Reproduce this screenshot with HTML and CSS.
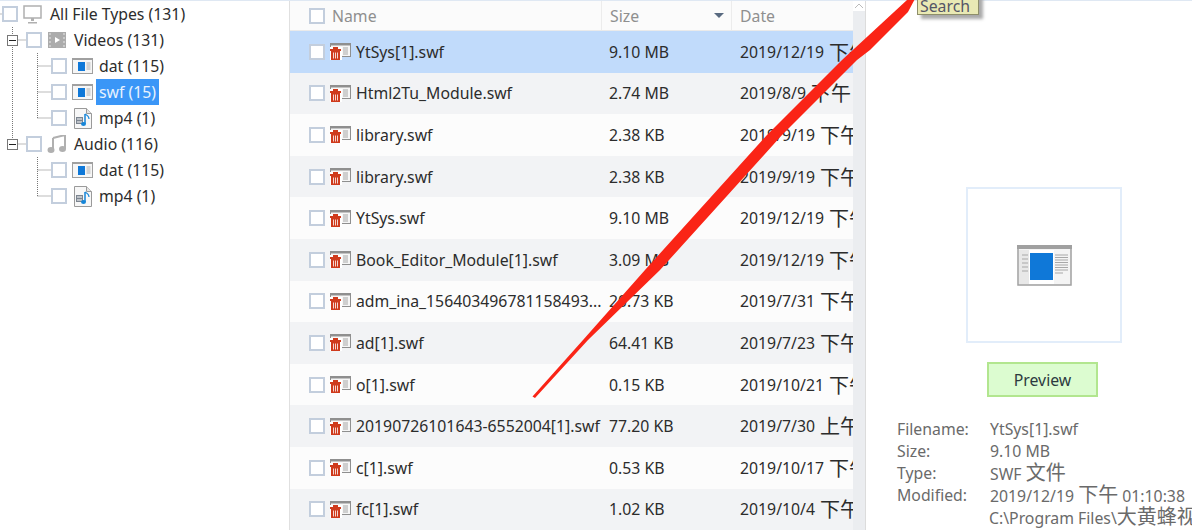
FILE: index.html
```html
<!DOCTYPE html>
<html lang="en">
<head>
  <meta charset="UTF-8" />
  <meta name="viewport" content="width=device-width, initial-scale=1.0" />
  <title>File Recovery</title>
  <link rel="stylesheet" href="styles.css">
</head>
<body>
  <svg class="defs" width="0" height="0">
    <symbol id="file-icon" viewBox="0 0 21 16">
      <rect x="0.500" y="0.500" width="20" height="15" fill="#f6f6f6" stroke="#a0a0a0"/>
      <rect x="0" y="0" width="21" height="2" fill="#a0a0a0"/>
      <rect x="6" y="4" width="7" height="9" fill="#0f78d8"/>
      <path d="M14.500 5h4M14.500 7h4M14.500 9h4M14.500 11h4" stroke="#b0b0b0"/>
    </symbol>
    <symbol id="swf-icon" viewBox="0 0 21 17">
      <rect x="0.500" y="0.500" width="20" height="13" fill="#f6f6f6" stroke="#8f8f8f"/>
      <rect x="0" y="0" width="21" height="2.500" fill="#8f8f8f"/>
      <path d="M13 5h5M13 7h5M13 9h5M13 11h5" stroke="#a8a8a8"/>
      <rect x="0" y="4" width="12" height="13" fill="#fff"/>
      <path d="M0 6h11v2H0zM3 4h5v2H3z" fill="#cf3a1c"/>
      <path d="M1 8h9v9H1z" fill="#cf3a1c"/>
      <path d="M3.500 9.500v6M5.500 9.500v6M7.500 9.500v6" stroke="#fff" stroke-width="0.800"/>
    </symbol>
    <symbol id="media-icon" viewBox="0 0 18 21">
      <path d="M0.500 0.500h12l5 5v15h-17z" fill="#f7f7f7" stroke="#9a9a9a"/>
      <path d="M12.500 0.500v5h5" fill="#e4e4e4" stroke="#9a9a9a"/>
      <path d="M2 9h7v7H2z" fill="#7c8590"/>
      <path d="M3 11h5M3 14h5" stroke="#fff"/>
      <path d="M11 6v10" stroke="#1585d8" stroke-width="1.500"/>
      <path d="M11 6c2 1 4 2 4 5" fill="none" stroke="#1585d8" stroke-width="1.200"/>
      <ellipse cx="9.500" cy="16" rx="2.500" ry="2" fill="#1585d8"/>
    </symbol>
    <symbol id="checkbox" viewBox="0 0 16 16">
      <rect x="1" y="1" width="14" height="14" fill="#fff" stroke="#c3cedd" stroke-width="2"/>
    </symbol>
  </svg>

  <div class="app">
    <aside class="tree">
      <svg class="tree-lines" width="100" height="210">
        <path d="M0.500 14h2M12.500 27v117M12.500 40h14M12.500 144h14M37.500 53v65M37.500 66h14M37.500 92h14M37.500 118h14M37.500 157v39M37.500 170h14M37.500 196h14" fill="none" stroke="#777" stroke-dasharray="1 1"/>
      </svg>
      <div class="node level-0">
        <svg class="check"><use href="#checkbox"/></svg>
        <svg class="node-icon" width="20" height="19" viewBox="0 0 20 19"><path d="M1 1h17v12H1z" fill="#fff" stroke="#b0b0b0" stroke-width="1.500"/><path d="M8 13h3v3H8zM5 17h9v1.500H5z" fill="#b0b0b0"/></svg>
        <span class="node-label">All File Types (131)</span>
      </div>
      <div class="node level-1">
        <span class="toggle"></span>
        <svg class="check"><use href="#checkbox"/></svg>
        <svg class="node-icon" width="20" height="16" viewBox="0 0 20 16"><path d="M1 0h18v16H1z" fill="#ababab"/><path d="M8 5l5 3-5 3z" fill="#fff"/><path d="M2 2h2M2 6h2M2 10h2M2 14h2M16 2h2M16 6h2M16 10h2M16 14h2" stroke="#e8e8e8"/></svg>
        <span class="node-label">Videos (131)</span>
      </div>
      <div class="node level-2">
        <svg class="check"><use href="#checkbox"/></svg>
        <svg class="node-icon" width="21" height="16"><use href="#file-icon"/></svg>
        <span class="node-label">dat (115)</span>
      </div>
      <div class="node level-2">
        <svg class="check"><use href="#checkbox"/></svg>
        <svg class="node-icon" width="21" height="16"><use href="#file-icon"/></svg>
        <span class="node-label selected">swf (15)</span>
      </div>
      <div class="node level-2">
        <svg class="check"><use href="#checkbox"/></svg>
        <svg class="node-icon media" width="18" height="21"><use href="#media-icon"/></svg>
        <span class="node-label">mp4 (1)</span>
      </div>
      <div class="node level-1">
        <span class="toggle"></span>
        <svg class="check"><use href="#checkbox"/></svg>
        <svg class="node-icon" width="20" height="18" viewBox="0 0 20 18"><path d="M6 3l12-3v14" fill="none" stroke="#b0b0b0" stroke-width="2"/><path d="M6 3v12" stroke="#b0b0b0" stroke-width="2"/><ellipse cx="4" cy="15" rx="3.500" ry="3" fill="#b0b0b0"/><ellipse cx="15.500" cy="14" rx="3.500" ry="3" fill="#b0b0b0"/></svg>
        <span class="node-label">Audio (116)</span>
      </div>
      <div class="node level-2">
        <svg class="check"><use href="#checkbox"/></svg>
        <svg class="node-icon" width="21" height="16"><use href="#file-icon"/></svg>
        <span class="node-label">dat (115)</span>
      </div>
      <div class="node level-2">
        <svg class="check"><use href="#checkbox"/></svg>
        <svg class="node-icon media" width="18" height="21"><use href="#media-icon"/></svg>
        <span class="node-label">mp4 (1)</span>
      </div>
    </aside>

    <main class="files">
      <div class="table">
        <div class="row head">
          <div class="cell name-cell"><svg class="check"><use href="#checkbox"/></svg><span>Name</span></div>
          <div class="cell size-cell">Size<i class="sort"></i></div>
          <div class="cell date-cell">Date</div>
        </div>
        <div id="rows"></div>
      </div>
      <div class="scrollbar">
        <svg width="12" height="10" viewBox="0 0 12 10"><path d="M2 7l4-4 4 4" fill="none" stroke="#bbb"/></svg>
      </div>
    </main>

    <section class="details">
      <div class="thumb">
        <svg width="55" height="41" viewBox="0 0 55 41">
          <rect x="1" y="1" width="53" height="39" fill="#f4f4f4" stroke="#a0a0a0" stroke-width="1.500"/>
          <rect x="0" y="0" width="55" height="4" fill="#a0a0a0"/>
          <rect x="2" y="5" width="11" height="34" fill="#e8e8e8"/>
          <rect x="12" y="5" width="25" height="34" fill="#fff"/>
          <rect x="13" y="8" width="23" height="27" fill="#0f78d8"/>
          <path d="M38 10h13M38 12.500h13M38 15h13M38 17.500h13M38 20h13M38 22.500h13M38 25h13M38 28h8M5 10h6M5 14h6M5 18h6M5 22h6M5 26h6" stroke="#a8a8a8"/>
        </svg>
      </div>
      <button class="preview-btn">Preview</button>
      <dl class="info">
        <dt>Filename:</dt><dd>YtSys[1].swf</dd>
        <dt>Size:</dt><dd>9.10 MB</dd>
        <dt>Type:</dt><dd>SWF <span class="cjk">文件</span></dd>
        <dt>Modified:</dt><dd>2019/12/19 <span class="cjk">下午</span> 01:10:38</dd>
        <dt></dt><dd class="path">C:\Program Files\<span class="cjk">大黄蜂视频</span></dd>
      </dl>
    </section>
  </div>

  <div class="tooltip">Search</div>
  <svg class="arrow" width="1192" height="530" viewBox="0 0 1192 530">
    <path d="M532.500 396.500L535 398L588 340L660 270L782 135L857 60L870 50L908 12L917 -5L907 0L842 60L767 135L645 270L583 340Z" fill="#fa2416"/>
  </svg>

  <script>
    // file list rows
    const files = [
      ['YtSys[1].swf', '9.10 MB', '2019/12/19', '下午'],
      ['Html2Tu_Module.swf', '2.74 MB', '2019/8/9', '下午'],
      ['library.swf', '2.38 KB', '2019/9/19', '下午'],
      ['library.swf', '2.38 KB', '2019/9/19', '下午'],
      ['YtSys.swf', '9.10 MB', '2019/12/19', '下午'],
      ['Book_Editor_Module[1].swf', '3.09 MB', '2019/12/19', '下午'],
      ['adm_ina_156403496781158493...', '20.73 KB', '2019/7/31', '下午'],
      ['ad[1].swf', '64.41 KB', '2019/7/23', '下午'],
      ['o[1].swf', '0.15 KB', '2019/10/21', '下午'],
      ['20190726101643-6552004[1].swf', '77.20 KB', '2019/7/30', '上午'],
      ['c[1].swf', '0.53 KB', '2019/10/17', '下午'],
      ['fc[1].swf', '1.02 KB', '2019/10/4', '下午'],
    ];

    const rows = document.getElementById('rows');
    files.forEach((f, i) => {
      const div = document.createElement('div');
      div.className = 'row' + (i === 0 ? ' active' : '');
      div.innerHTML = `<div class="cell name-cell"><svg class="check"><use href="#checkbox"/></svg><svg class="file-icon" width="21" height="17"><use href="#swf-icon"/></svg><span class="file-name">${f[0]}</span></div>
        <div class="cell size-cell">${f[1]}</div>
        <div class="cell date-cell">${f[2]} <span class="cjk">${f[3]}</span></div>`;
      rows.appendChild(div);
    });
  </script>
</body>
</html>
```

FILE: styles.css
```css
html, body {
  margin: 0;
  padding: 0;
  height: 530px;
  overflow: hidden;
  background: #fff;
}
body {
  font-family: "Noto Sans", "Open Sans", "Noto Sans CJK SC", sans-serif;
  font-size: 15.8px;
  color: #2c2c2c;
  position: relative;
}
.defs {
  position: absolute;
}
.cjk {
  font-family: "Noto Sans CJK SC", sans-serif;
  font-size: 20px;
  line-height: 1;
}
.app {
  display: flex;
  height: 529px;
  border-top: 1px solid #dfe8f3;
}
.check {
  width: 16px;
  height: 16px;
  flex: none;
}

/* tree */
.tree {
  width: 289px;
  flex: none;
  border-right: 1px solid #e0e0e0;
  position: relative;
}
.tree-lines {
  position: absolute;
  left: 0;
  top: -1px;
}
.node {
  display: flex;
  align-items: center;
  height: 26px;
  position: relative;
}
.level-0 {
  padding-left: 2px;
}
.level-1 {
  padding-left: 26px;
}
.level-2 {
  padding-left: 51px;
}
.node-icon {
  margin-left: 5px;
  flex: none;
}
.node-icon.media {
  margin: 0 1px 0 7px;
}
.node-label {
  margin-left: 4px;
  padding: 0 3px;
  line-height: 26px;
  white-space: nowrap;
}
.level-2 .node-label {
  margin-left: 3px;
}
.selected {
  background: #3a96f7;
  color: #e8f2fe;
}
.toggle {
  position: absolute;
  left: 7px;
  top: 8px;
  width: 9px;
  height: 9px;
  border: 1px solid #777;
  background: #fff;
}
.toggle::after {
  content: "";
  position: absolute;
  left: 1px;
  top: 4px;
  width: 7px;
  height: 1px;
  background: #222;
}

/* file table */
.files {
  width: 575px;
  flex: none;
  display: flex;
  border-right: 1px solid #dcdcdc;
}
.table {
  width: 563px;
  flex: none;
  overflow: hidden;
}
.row {
  display: grid;
  grid-template-columns: 311px 130px 122px;
  height: 41.6px;
  align-items: center;
  background: #fcfcfc;
}
#rows .row:nth-child(even) {
  background: #f2f3f5;
}
#rows .row.active {
  background: #c1dbfb;
}
.row.head {
  height: 29px;
  background: #fbfbfb;
  border-bottom: 1px solid #eaeaea;
  color: #8f8f8f;
}
.cell {
  display: flex;
  align-items: center;
  height: 100%;
  white-space: nowrap;
  overflow: hidden;
}
.name-cell {
  padding-left: 19px;
}
.size-cell {
  padding-left: 8px;
  position: relative;
}
.date-cell {
  padding-left: 9px;
  gap: 5px;
}
.head .name-cell span {
  margin-left: 7px;
}
.head .size-cell,
.head .date-cell {
  border-left: 1px solid #ececec;
  padding-left: 8px;
}
.sort {
  position: absolute;
  left: 112px;
  top: 12px;
  border-left: 5px solid transparent;
  border-right: 5px solid transparent;
  border-top: 5px solid #596a80;
}
.file-icon {
  margin-left: 5px;
  flex: none;
}
.file-name {
  margin-left: 5px;
}
.scrollbar {
  width: 12px;
  flex: none;
  background: #ebedf0;
}
.scrollbar svg {
  display: block;
  background: #fff;
}

/* right side */
.details {
  flex: 1;
  min-width: 0;
  display: flex;
  flex-direction: column;
  overflow: hidden;
  padding-top: 186px;
}
.thumb {
  width: 152px;
  height: 152px;
  margin-left: 100px;
  border: 2px solid #e2edfa;
  display: flex;
  align-items: center;
  justify-content: center;
  flex: none;
}
.preview-btn {
  width: 111px;
  height: 35px;
  margin: 19px 0 0 121px;
  background: #dcfcd0;
  border: 2px solid #b2e68f;
  font: inherit;
  color: #2c3a40;
  padding: 1px 0 0;
  flex: none;
}
.info {
  display: grid;
  grid-template-columns: 93px 1fr;
  grid-auto-rows: 22px;
  margin: 21px 0 0 31px;
  color: #6a6a6a;
  white-space: nowrap;
  align-items: center;
  line-height: 20px;
}
.info dt, .info dd {
  margin: 0;
}
.info .path {
  margin-left: -1px;
}

/* things lying over the window */
.tooltip {
  position: absolute;
  left: 917px;
  top: -7px;
  width: 62px;
  height: 22px;
  line-height: 24px;
  padding-left: 2px;
  box-sizing: border-box;
  background: #e9e9b4;
  border: 1px solid #8e8e6a;
  box-shadow: 4px 4px 3px #aaa;
  color: #556;
}
.arrow {
  position: absolute;
  left: 0;
  top: 0;
  pointer-events: none;
}
```
